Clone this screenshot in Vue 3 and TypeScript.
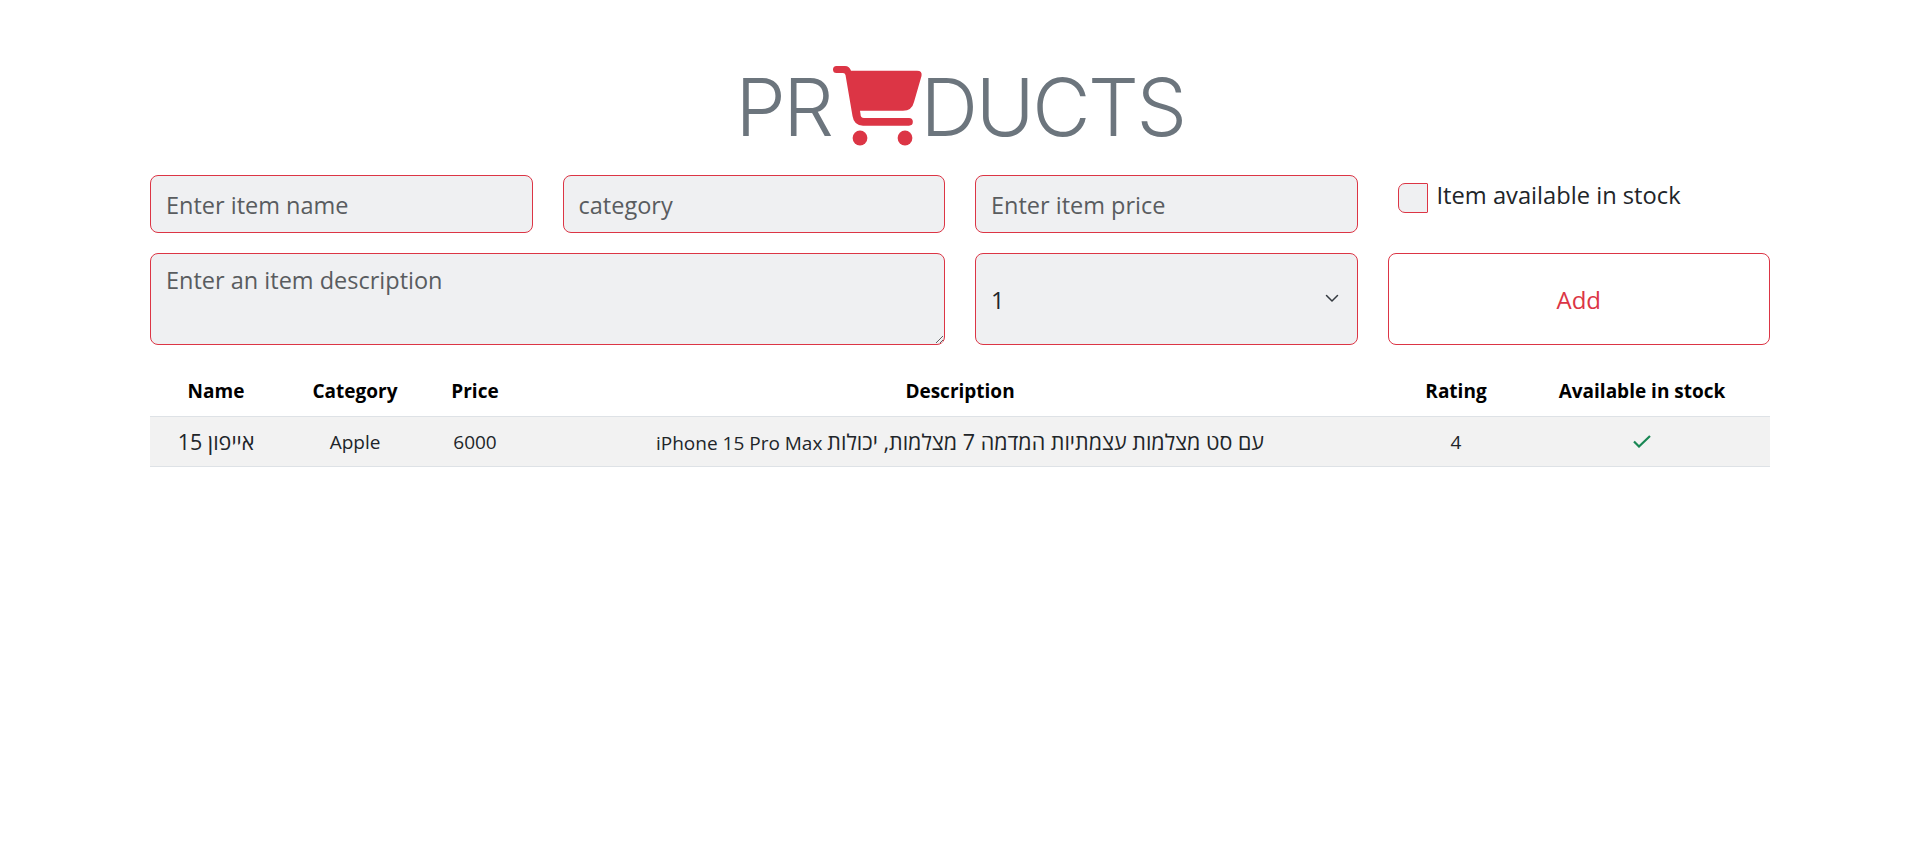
<template>
  <div class="page">
    <h1 class="logo">
      <span>PR</span>
      <svg class="logo__cart" viewBox="0 0 92 84" width="92" height="84" aria-hidden="true">
        <path d="M4.5 2H13Q17.5 2 19 6.7H85Q90.5 6.7 89.5 12L82 38Q80 46.7 71 46.7H28L28.5 50Q28.5 54 32 54H77a3.85 3.85 0 0 1 0 7.7H31Q22 61.7 20.5 52L13.5 11Q13 9 11 9H4.5a3.5 3.5 0 0 1 0-7Z" />
        <circle cx="28" cy="74" r="7.4" />
        <circle cx="73" cy="74" r="7.4" />
      </svg>
      <span>DUCTS</span>
    </h1>

    <form class="form" @submit.prevent>
      <input v-model="name" class="field" type="text" placeholder="Enter item name" />
      <input v-model="category" class="field" type="text" placeholder="category" />
      <input v-model="price" class="field" type="text" placeholder="Enter item price" />
      <label class="stock">
        <input v-model="inStock" class="stock__box" type="checkbox" />
        <span>Item available in stock</span>
      </label>
      <textarea v-model="description" class="field field--area" placeholder="Enter an item description"></textarea>
      <div class="rating">
        <select v-model="rating" class="field field--select">
          <option v-for="n in 5" :key="n" :value="n">{{ n }}</option>
        </select>
        <svg class="rating__arrow" viewBox="0 0 16 16" width="16" height="16" aria-hidden="true">
          <path d="m2.5 5.5 5.5 5.5 5.5-5.5" fill="none" stroke="#343a40" stroke-width="1.5" stroke-linecap="round" stroke-linejoin="round" />
        </svg>
      </div>
      <button class="add" type="submit">Add</button>
    </form>

    <table class="products">
      <colgroup>
        <col v-for="w in columnWidths" :key="w" :style="{ width: w + 'px' }" />
      </colgroup>
      <thead>
        <tr>
          <th>Name</th>
          <th>Category</th>
          <th>Price</th>
          <th>Description</th>
          <th>Rating</th>
          <th>Available in stock</th>
        </tr>
      </thead>
      <tbody>
        <tr v-for="item in items" :key="item.category">
          <td><span class="hebrew">{{ item.name }}</span></td>
          <td>{{ item.category }}</td>
          <td>{{ item.price }}</td>
          <td>{{ item.model }} <span class="hebrew">{{ item.description }}</span></td>
          <td>{{ item.rating }}</td>
          <td>
            <svg v-if="item.available" class="check" viewBox="0 0 18 13" width="18" height="13" aria-hidden="true">
              <path d="M1 6.5l5 5L17 1" fill="none" stroke="#198754" stroke-width="2.2" />
            </svg>
          </td>
        </tr>
      </tbody>
    </table>
  </div>
</template>

<script setup lang="ts">
import { ref } from 'vue'

interface Item {
  name: string
  category: string
  price: number
  model: string
  description: string
  rating: number
  available: boolean
}

const name = ref('')
const category = ref('')
const price = ref('')
const description = ref('')
const rating = ref(1)
const inStock = ref(false)

const columnWidths = [132, 146, 94, 876, 116, 256]

const items = ref<Item[]>([
  {
    name: 'אייפון 15',
    category: 'Apple',
    price: 6000,
    model: 'iPhone 15 Pro Max',
    description: 'עם סט מצלמות עצמתיות המדמה 7 מצלמות, יכולות',
    rating: 4,
    available: true,
  },
])
</script>

<style>
body {
  background: #fff;
}
</style>

<style scoped>
.page {
  padding: 0 147px 0 150px;
  font-family: 'Open Sans', 'Liberation Sans', sans-serif;
  color: #212529;
}

.logo {
  display: flex;
  justify-content: center;
  align-items: flex-start;
  height: 175px;
  margin: 0;
  padding-top: 64px;
  box-sizing: border-box;
  font-family: Inter, sans-serif;
  font-size: 80px;
  font-weight: 300;
  line-height: 86px;
  letter-spacing: -2.4px;
  color: #6c757d;
}

.logo__cart {
  flex: none;
  margin-right: -3px;
  fill: #dc3545;
}

.form {
  display: grid;
  grid-template-columns: repeat(4, 1fr);
  grid-template-rows: 58px 92px;
  gap: 20px 30px;
}

.field {
  width: 100%;
  height: 100%;
  box-sizing: border-box;
  padding: 9px 15px 8px;
  border: 1px solid #dc3545;
  border-radius: 8px;
  background: #eff0f2;
  font: inherit;
  font-size: 23.5px;
  color: #212529;
  outline: none;
}

.field::placeholder {
  color: #595c5f;
  opacity: 1;
}

.field--area {
  grid-column: span 2;
  padding-top: 10px;
  resize: vertical;
}

.field--select {
  appearance: none;
}

.rating {
  position: relative;
}

.rating__arrow {
  position: absolute;
  top: 37px;
  right: 18px;
}

.stock {
  display: flex;
  align-items: flex-start;
  gap: 9px;
  padding: 5px 0 0 10px;
  font-size: 23.7px;
  line-height: 30px;
}

.stock__box {
  flex: none;
  width: 30px;
  height: 30px;
  margin: 3px 0 0;
  appearance: none;
  border: 1px solid #dc3545;
  border-radius: 7px 1px 1px 7px;
  background: #eff0f2;
}

.add {
  border: 1px solid #dc3545;
  border-radius: 8px;
  background: #fff;
  font: inherit;
  font-size: 24px;
  color: #dc3545;
}

.products {
  width: 1620px;
  margin-top: 23px;
  border-collapse: collapse;
  table-layout: fixed;
  font-size: 19px;
  text-align: center;
}

.products th {
  height: 46px;
  padding: 0 0 2px;
  font-weight: 700;
  color: #000;
  border-bottom: 1px solid #dee2e6;
}

.products td {
  height: 49px;
  padding: 0;
  background: #f2f2f2;
  border-bottom: 1px solid #dee2e6;
}

.hebrew {
  font-size: 21.5px;
}

.check {
  display: block;
  margin: 0 auto;
}
</style>
